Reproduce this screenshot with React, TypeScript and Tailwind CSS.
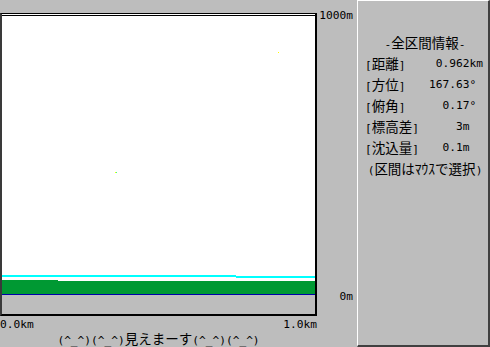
import React from 'react';

const K = ({ children }: { children: React.ReactNode }) => (
  <span className="text-[13.5px] font-['Noto_Sans_CJK_JP',sans-serif]">{children}</span>
);

const rows: [string, string][] = [
  ['距離', '0.962km'],
  ['方位', '167.63° '],
  ['俯角', '0.17° '],
  ['標高差', '3m  '],
  ['沈込量', '0.1m  '],
];

const Profile = () => (
  <svg width="313" height="298" className="block" shapeRendering="crispEdges">
    <rect width="313" height="298" fill="#ffffff" />
    <rect y="279" width="313" height="19" fill="#bdbdbd" />
    <rect x="0" y="264" width="56" height="14" fill="#009933" />
    <rect x="56" y="265" width="257" height="13" fill="#009933" />
    <rect x="0" y="278" width="313" height="1" fill="#0000aa" />
    <rect x="0" y="259" width="234" height="2" fill="#00ffff" />
    <rect x="234" y="260" width="79" height="2" fill="#00ffff" />
    <rect x="113" y="156" width="1" height="1" fill="#ffff00" />
    <rect x="114" y="156" width="1" height="1" fill="#33ff99" />
    <rect x="276" y="36" width="1" height="1" fill="#ffff00" />
  </svg>
);

export default function App() {
  return (
    <div className="w-[490px] h-[347px] bg-[#bdbdbd] flex overflow-hidden text-black text-[11.2px] font-['DejaVu_Sans_Mono','Noto_Sans_CJK_JP',monospace]">
      <div className="w-[357px] flex flex-col">
        <div className="flex h-[316px]">
          <div className="mt-[13px] w-[317px] h-[303px] flex flex-col border-black border-t border-r-2 border-b-2 border-l-2 border-l-[#3a3a3a]">
            <div className="h-px bg-white" />
            <div className="h-px bg-black" />
            <Profile />
          </div>
          <div className="w-[36px] flex flex-col items-end leading-[13px]">
            <div className="pt-[9px]">1000m</div>
            <div className="mt-[268px]">0m</div>
          </div>
        </div>
        <div className="w-[317px] mt-[2px] flex justify-between leading-[13px]">
          <span>0.0km</span>
          <span>1.0km</span>
        </div>
        <div className="w-[317px] text-center leading-[14px] whitespace-pre">
          (^_^)(^_^)<K>見えまーす</K>(^_^)(^_^)
        </div>
      </div>
      <div className="w-[133px] h-[347px] border-t border-l border-t-white border-l-white border-r-2 border-b-2 border-r-[#404040] border-b-[#404040] pt-[32px] leading-[19px]">
        <div className="pl-[4px] text-center">
          -<K>全区間情報</K>-
        </div>
        {rows.map(([label, value]) => (
          <div key={label} className="flex justify-between pl-[7px] pr-[5px]">
            <span>
              [<K>{label}</K>]
            </span>
            <span className="whitespace-pre">{value}</span>
          </div>
        ))}
        <div className="pl-[4px] text-center">
          (<K>区間はﾏｳｽで選択</K>)
        </div>
      </div>
    </div>
  );
}
